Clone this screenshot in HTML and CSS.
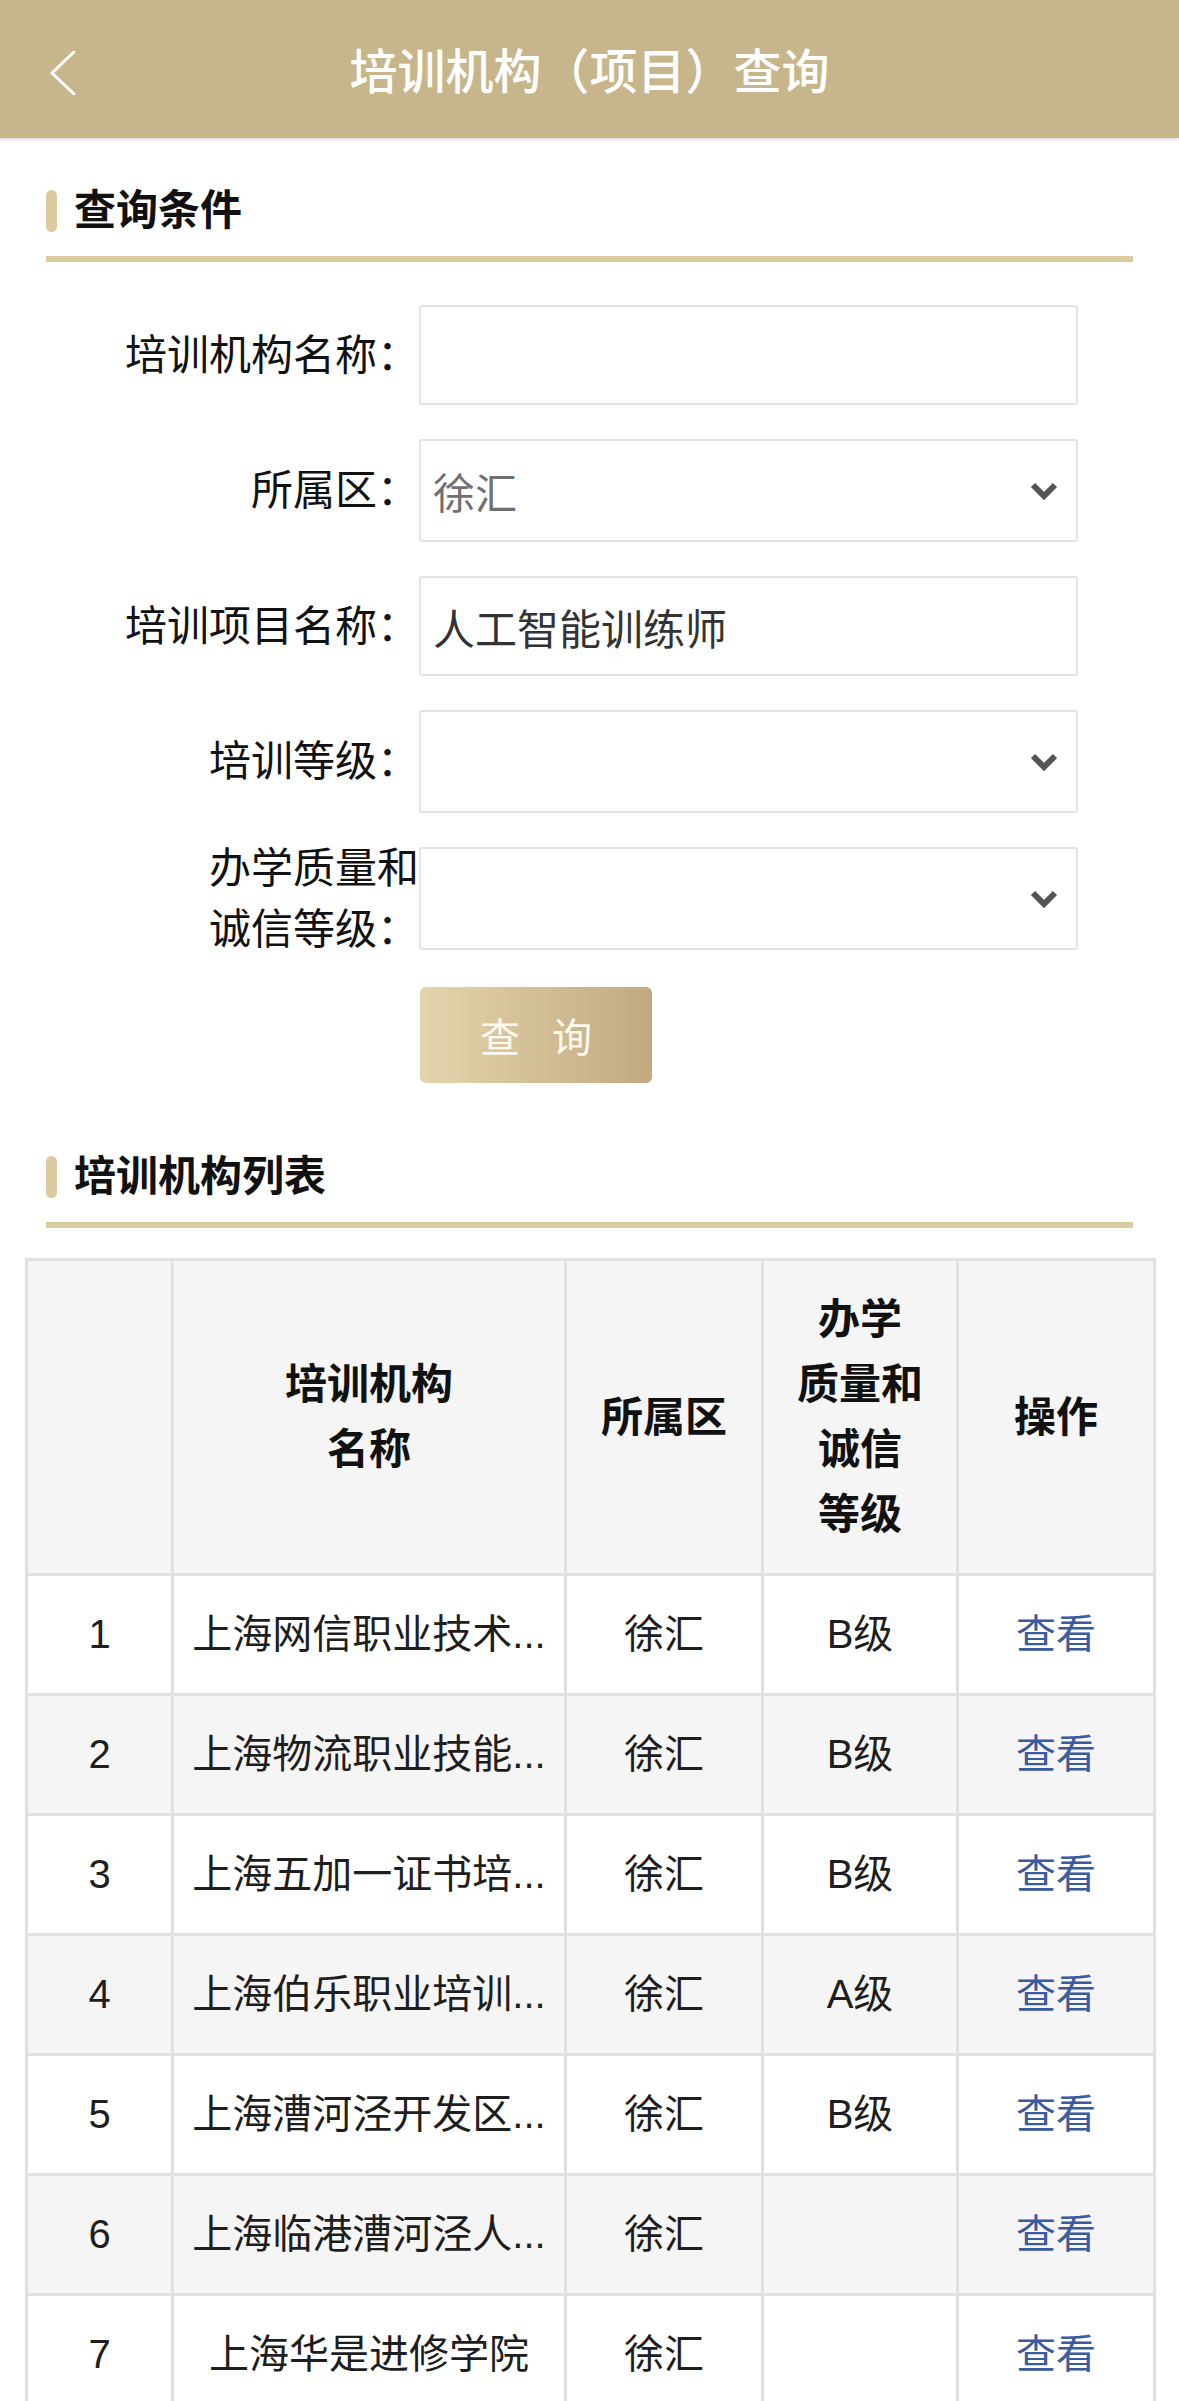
FILE: index.html
```html
<!DOCTYPE html>
<html lang="zh-CN">
<head>
    <meta charset="UTF-8">
    <meta name="viewport" content="width=device-width, initial-scale=1.0">
    <title>培训机构（项目）查询</title>
    <link rel="stylesheet" href="styles.css">
</head>
<body>
    <header class="topbar">
        <a class="back" href="#">
            <svg width="26" height="44" viewBox="0 0 26 44"><polyline points="24,1 2,22 24,43" fill="none" stroke="#fff" stroke-width="3" stroke-linecap="round" stroke-linejoin="round"/></svg>
        </a>
        <h1>培训机构（项目）查询</h1>
        <span></span>
    </header>

    <section class="panel panel-query">
        <h2 class="panel-title">查询条件</h2>
        <form class="query-form">
            <div class="field">
                <label>培训机构名称：</label>
                <div class="input"></div>
            </div>
            <div class="field">
                <label>所属区：</label>
                <div class="input select"><span class="muted">徐汇</span><svg class="chevron" width="30" height="20" viewBox="0 0 30 20"><polyline points="4,4 15,15 26,4" fill="none" stroke="#555" stroke-width="6"/></svg></div>
            </div>
            <div class="field">
                <label>培训项目名称：</label>
                <div class="input">人工智能训练师</div>
            </div>
            <div class="field">
                <label>培训等级：</label>
                <div class="input select"><span></span><svg class="chevron" width="30" height="20" viewBox="0 0 30 20"><polyline points="4,4 15,15 26,4" fill="none" stroke="#555" stroke-width="6"/></svg></div>
            </div>
            <div class="field">
                <label class="two-line">办学质量和<br>诚信等级：</label>
                <div class="input select"><span></span><svg class="chevron" width="30" height="20" viewBox="0 0 30 20"><polyline points="4,4 15,15 26,4" fill="none" stroke="#555" stroke-width="6"/></svg></div>
            </div>
            <div class="actions">
                <button type="button" class="btn-search"><span>查询</span></button>
            </div>
        </form>
    </section>

    <section class="panel panel-list">
        <h2 class="panel-title">培训机构列表</h2>
        <table class="org-table">
            <colgroup>
                <col style="width: 146px">
                <col style="width: 393px">
                <col style="width: 197px">
                <col style="width: 195px">
                <col style="width: 197px">
            </colgroup>
            <thead>
                <tr>
                    <th></th>
                    <th>培训机构<br>名称</th>
                    <th>所属区</th>
                    <th>办学<br>质量和<br>诚信<br>等级</th>
                    <th>操作</th>
                </tr>
            </thead>
            <tbody>
                <tr><td>1</td><td>上海网信职业技术...</td><td>徐汇</td><td>B级</td><td><a class="view" href="#">查看</a></td></tr>
                <tr><td>2</td><td>上海物流职业技能...</td><td>徐汇</td><td>B级</td><td><a class="view" href="#">查看</a></td></tr>
                <tr><td>3</td><td>上海五加一证书培...</td><td>徐汇</td><td>B级</td><td><a class="view" href="#">查看</a></td></tr>
                <tr><td>4</td><td>上海伯乐职业培训...</td><td>徐汇</td><td>A级</td><td><a class="view" href="#">查看</a></td></tr>
                <tr><td>5</td><td>上海漕河泾开发区...</td><td>徐汇</td><td>B级</td><td><a class="view" href="#">查看</a></td></tr>
                <tr><td>6</td><td>上海临港漕河泾人...</td><td>徐汇</td><td></td><td><a class="view" href="#">查看</a></td></tr>
                <tr><td>7</td><td>上海华是进修学院</td><td>徐汇</td><td></td><td><a class="view" href="#">查看</a></td></tr>
            </tbody>
        </table>
    </section>
</body>
</html>
```

FILE: styles.css
```css
body {
    margin: 0;
    font-family: "Liberation Sans", "Noto Sans CJK SC", sans-serif;
    color: #1a1a1a;
    background-color: #fff;
}

.topbar {
    height: 138px;
    box-sizing: border-box;
    padding-top: 8px;
    display: grid;
    grid-template-columns: 1fr auto 1fr;
    align-items: center;
    background-color: #c7b68c;
    box-shadow: 0 2px 2px rgba(0, 0, 0, 0.12);
}

.topbar h1 {
    margin: 0;
    font-size: 48px;
    font-weight: 500;
    line-height: 60px;
    color: #fff;
}

.back {
    display: flex;
    padding-left: 50px;
}

.panel-query {
    padding-top: 52px;
}

.panel-list {
    padding-top: 73px;
}

.panel-title {
    margin: 0 46px;
    padding-bottom: 24px;
    border-bottom: 6px solid #dccb9f;
    display: flex;
    align-items: center;
    gap: 17px;
    font-size: 42px;
    line-height: 42px;
    font-weight: 700;
    color: #111;
}

.panel-title::before {
    content: "";
    width: 11px;
    height: 42px;
    border-radius: 6px;
    background-color: #dccb9f;
}

/* query form */
.query-form {
    margin-top: 43px;
    display: flex;
    flex-direction: column;
    gap: 34px;
}

.field {
    display: flex;
    align-items: center;
}

.field label {
    flex-shrink: 0;
    width: 419px;
    text-align: right;
    font-size: 42px;
    line-height: 61px;
    color: #111;
}

.field label.two-line {
    margin: -10px 0;
}

.input {
    width: 659px;
    height: 100px;
    box-sizing: border-box;
    padding: 0 17px 0 12px;
    border: 2px solid #e3e3e3;
    border-radius: 3px;
    display: flex;
    align-items: center;
    justify-content: space-between;
    font-size: 42px;
    color: #333;
}

.input.select {
    height: 103px;
}

.muted {
    color: #707070;
}

.actions {
    margin-top: 3px;
    padding-left: 420px;
}

.btn-search {
    width: 232px;
    height: 96px;
    padding: 0 0 0 32px;
    border: none;
    border-radius: 6px;
    background: linear-gradient(90deg, #e4d4ad, #c2a980);
    color: #fffaf0;
    font-family: inherit;
    font-size: 40px;
    letter-spacing: 32px;
    cursor: pointer;
}

/* result table */
.org-table {
    margin: 30px 0 0 25px;
    width: 1128px;
    border-collapse: collapse;
    table-layout: fixed;
    font-size: 40px;
}

.org-table th,
.org-table td {
    border: 3px solid #e1e1e1;
    text-align: center;
}

.org-table th {
    padding: 26px 8px;
    background-color: #f5f5f5;
    font-size: 42px;
    font-weight: 700;
    line-height: 65px;
    color: #111;
}

.org-table td {
    padding: 37px 14px;
    line-height: 43px;
    white-space: nowrap;
    overflow: hidden;
    color: #1e1e1e;
}

.org-table tbody tr:nth-child(even) td {
    background-color: #f5f5f5;
}

.view {
    color: #3a5b9f;
    text-decoration: none;
}
```
